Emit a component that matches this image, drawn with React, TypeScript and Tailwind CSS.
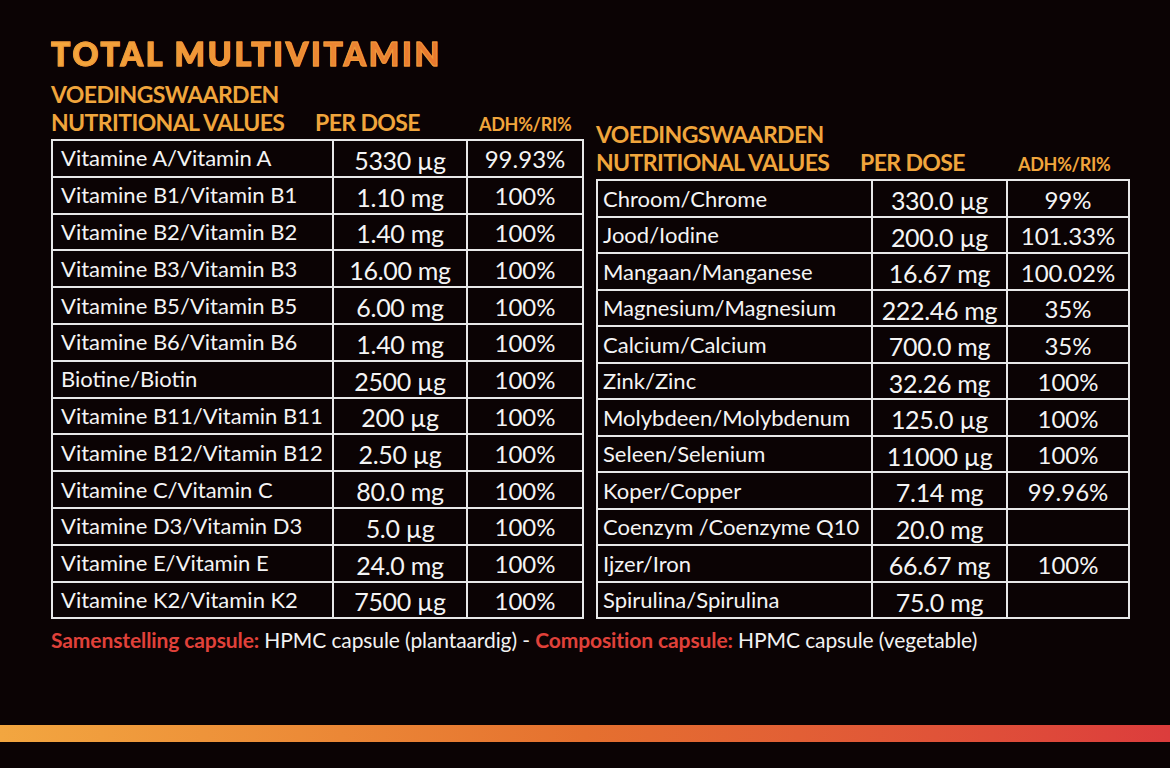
import React from 'react';

type Row = [string, string, string];

const left: Row[] = [
  ['Vitamine A/Vitamin A', '5330 µg', '99.93%'],
  ['Vitamine B1/Vitamin B1', '1.10 mg', '100%'],
  ['Vitamine B2/Vitamin B2', '1.40 mg', '100%'],
  ['Vitamine B3/Vitamin B3', '16.00 mg', '100%'],
  ['Vitamine B5/Vitamin B5', '6.00 mg', '100%'],
  ['Vitamine B6/Vitamin B6', '1.40 mg', '100%'],
  ['Biotine/Biotin', '2500 µg', '100%'],
  ['Vitamine B11/Vitamin B11', '200 µg', '100%'],
  ['Vitamine B12/Vitamin B12', '2.50 µg', '100%'],
  ['Vitamine C/Vitamin C', '80.0 mg', '100%'],
  ['Vitamine D3/Vitamin D3', '5.0 µg', '100%'],
  ['Vitamine E/Vitamin E', '24.0 mg', '100%'],
  ['Vitamine K2/Vitamin K2', '7500 µg', '100%'],
];

const right: Row[] = [
  ['Chroom/Chrome', '330.0 µg', '99%'],
  ['Jood/Iodine', '200.0 µg', '101.33%'],
  ['Mangaan/Manganese', '16.67 mg', '100.02%'],
  ['Magnesium/Magnesium', '222.46 mg', '35%'],
  ['Calcium/Calcium', '700.0 mg', '35%'],
  ['Zink/Zinc', '32.26 mg', '100%'],
  ['Molybdeen/Molybdenum', '125.0 µg', '100%'],
  ['Seleen/Selenium', '11000 µg', '100%'],
  ['Koper/Copper', '7.14 mg', '99.96%'],
  ['Coenzym /Coenzyme Q10', '20.0 mg', ''],
  ['Ijzer/Iron', '66.67 mg', '100%'],
  ['Spirulina/Spirulina', '75.0 mg', ''],
];

function Header({ perX, adhX }: { perX: string; adhX: string }) {
  return (
    <div className="text-[#f0a53c] font-bold tracking-[-0.6px]">
      <div className="text-[23px] leading-[28px]">VOEDINGSWAARDEN</div>
      <div className="flex items-baseline leading-[28px]">
        <span className={`${perX} text-[23px]`}>NUTRITIONAL VALUES</span>
        <span className={`${adhX} text-[23px]`}>PER DOSE</span>
        <span className="text-[18px] tracking-[-0.3px]">ADH%/RI%</span>
      </div>
    </div>
  );
}

function Table({ rows, widths, rowH, pad }: { rows: Row[]; widths: [string, string, string]; rowH: string; pad: string }) {
  return (
    <table className="border-collapse border-2 border-[#e8e8e8] mt-[1px]">
      <tbody>
        {rows.map((r) => (
          <tr key={r[0]} className={rowH}>
            <td className={`${widths[0]} ${pad} border-2 border-[#e8e8e8] text-[22px] leading-none whitespace-nowrap`}>{r[0]}</td>
            <td className={`${widths[1]} border-2 border-[#e8e8e8] text-center text-[25px] tracking-[-0.3px] leading-none pt-[4px] whitespace-nowrap`}>{r[1]}</td>
            <td className={`${widths[2]} border-2 border-[#e8e8e8] text-center text-[24px] leading-none pt-[2px] whitespace-nowrap`}>{r[2]}</td>
          </tr>
        ))}
      </tbody>
    </table>
  );
}

export default function App() {
  return (
    <div className="w-[1170px] h-[768px] bg-[#0b0304] text-[#f4f4f4] overflow-hidden flex flex-col" style={{ fontFamily: 'Lato, "Open Sans", sans-serif' }}>
      <div className="pl-[51px] pt-[35px]">
        <h1 className="text-[32px] leading-[38px] font-black tracking-[2.8px] bg-gradient-to-r from-[#f5a83c] to-[#e9782f] bg-clip-text text-transparent w-fit [-webkit-text-stroke:1px_#ef9a3a]">
          TOTAL MULTIVITAMIN
        </h1>
        <div className="flex items-end gap-[12px] mt-[7px]">
          <div className="flex flex-col">
            <Header perX="w-[264px]" adhX="w-[164px]" />
            <Table rows={left} widths={['w-[281px]', 'w-[134px]', 'w-[116px]']} rowH="h-[36.8px]" pad="pl-[8px]" />
          </div>
          <div className="flex flex-col">
            <Header perX="w-[264px]" adhX="w-[158px]" />
            <Table rows={right} widths={['w-[275px]', 'w-[135px]', 'w-[122px]']} rowH="h-[36.5px]" pad="pl-[5px]" />
          </div>
        </div>
        <p className="mt-[8px] text-[21px] leading-[26px] tracking-[-0.1px] text-[#f2f2f2]">
          <span className="text-[#e0413a] font-bold">Samenstelling capsule:</span> HPMC capsule (plantaardig) -{' '}
          <span className="text-[#e0413a] font-bold">Composition capsule:</span> HPMC capsule (vegetable)
        </p>
      </div>
      <div className="mt-auto mb-[26px] h-[17px] w-full bg-gradient-to-r from-[#f2a640] via-[#e5702f] to-[#dc3c3c]" />
    </div>
  );
}
